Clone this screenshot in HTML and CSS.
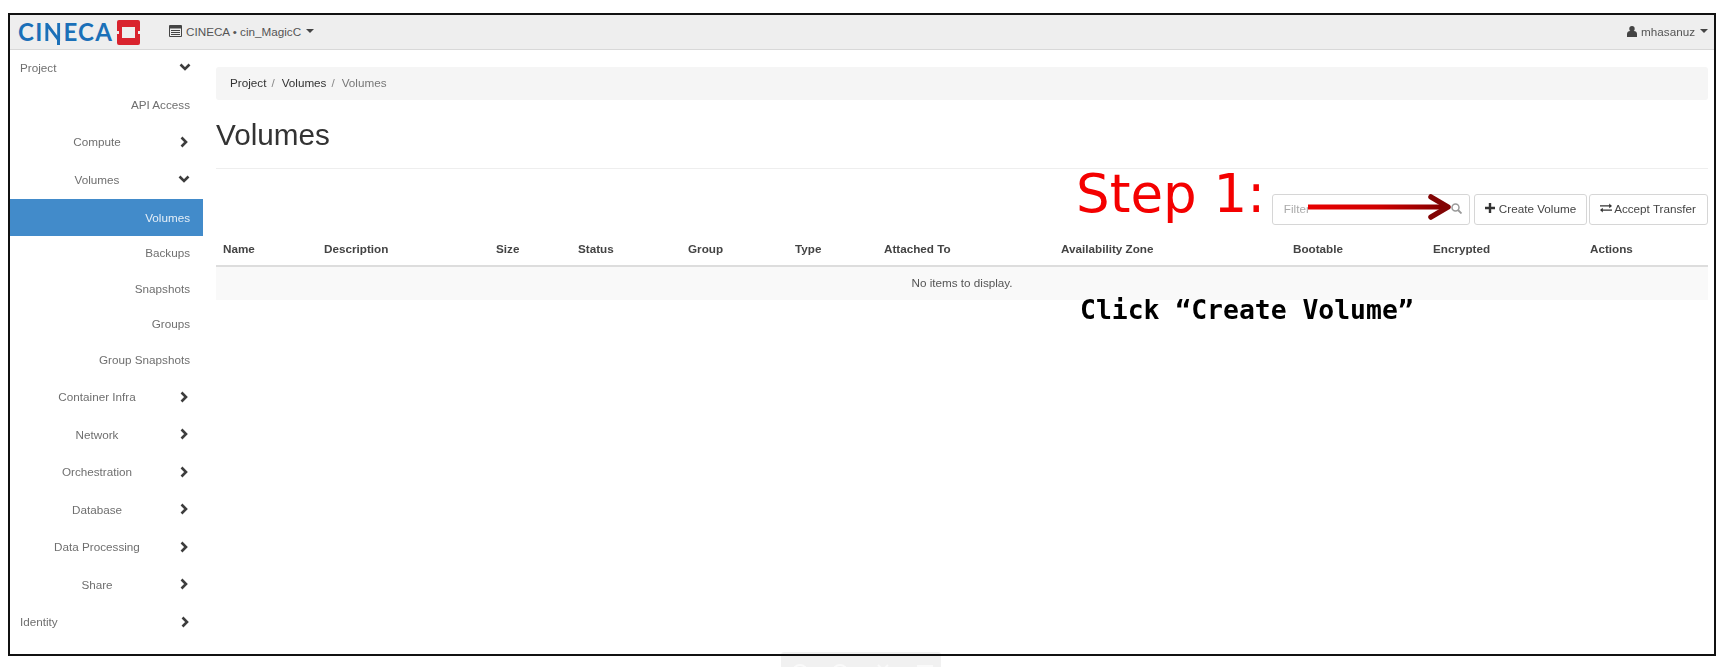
FILE: index.html
```html
<!DOCTYPE html>
<html lang="en">
<head>
  <meta charset="UTF-8">
  <title>Volumes</title>
  <link rel="stylesheet" href="styles.css">
</head>
<body>
  <!-- toolbar of the viewer, cut off by the bottom of the window -->
  <div class="dock">
    <svg width="160" height="15" viewBox="0 0 160 15">
      <g fill="none" stroke="#fafafa" stroke-width="2">
        <circle cx="19" cy="20" r="7"/>
        <circle cx="59" cy="20" r="7"/>
        <path d="M97 13l5 5 5-5"/>
        <rect x="137" y="14" width="14" height="10"/>
      </g>
    </svg>
  </div>

  <div class="frame">
    <header class="navbar">
      <div class="brand">
        <span class="brand-name">CI<span class="brand-n">N</span>ECA</span>
        <svg class="brand-mark" width="23" height="25" viewBox="0 0 23 25">
          <path fill="#d9232e" fill-rule="evenodd" d="M2 0H21a2 2 0 0 1 2 2V11H21V14H23V23a2 2 0 0 1-2 2H2a2 2 0 0 1-2-2V14H2V11H0V2A2 2 0 0 1 2 0ZM5 7V18H18V7Z"/>
        </svg>
      </div>
      <div class="project-switch">
        <svg class="icon" width="13" height="12" viewBox="0 0 13 12">
          <path fill="#444" fill-rule="evenodd" d="M1 0H12a1 1 0 0 1 1 1V11a1 1 0 0 1-1 1H1a1 1 0 0 1-1-1V1A1 1 0 0 1 1 0ZM1 3.500V11H12V3.500ZM2 5H11V6H2ZM2 7H11V8H2ZM2 9H11V10H2Z"/>
        </svg>
        <span>CINECA • cin_MagicC</span>
        <span class="caret"></span>
      </div>
      <div class="user-menu">
        <svg class="icon" width="10" height="11" viewBox="0 0 10 11">
          <circle cx="5" cy="2.800" r="2.700" fill="#444"/>
          <path fill="#444" d="M0 11V8C0 6 1.500 5 3 5H7C8.500 5 10 6 10 8V11Z"/>
        </svg>
        <span>mhasanuz</span>
        <span class="caret"></span>
      </div>
    </header>

    <div class="layout">
      <nav class="sidebar">
        <div class="nav-row top first">
          <span class="nav-label">Project</span>
          <svg class="chev" width="12" height="12" viewBox="0 0 12 12"><path d="M1.500 3.500 6 8l4.500-4.500"/></svg>
        </div>
        <div class="nav-row leaf api">API Access</div>
        <div class="nav-row group">
          <span class="nav-label">Compute</span>
          <svg class="chev" width="12" height="12" viewBox="0 0 12 12"><path d="M3.500 1.500 8 6l-4.500 4.500"/></svg>
        </div>
        <div class="nav-row group">
          <span class="nav-label">Volumes</span>
          <svg class="chev" width="12" height="12" viewBox="0 0 12 12"><path d="M1.500 3.500 6 8l4.500-4.500"/></svg>
        </div>
        <div class="nav-row leaf active">Volumes</div>
        <div class="nav-row leaf">Backups</div>
        <div class="nav-row leaf">Snapshots</div>
        <div class="nav-row leaf">Groups</div>
        <div class="nav-row leaf last">Group Snapshots</div>
        <div class="nav-row group">
          <span class="nav-label">Container Infra</span>
          <svg class="chev" width="12" height="12" viewBox="0 0 12 12"><path d="M3.500 1.500 8 6l-4.500 4.500"/></svg>
        </div>
        <div class="nav-row group">
          <span class="nav-label">Network</span>
          <svg class="chev" width="12" height="12" viewBox="0 0 12 12"><path d="M3.500 1.500 8 6l-4.500 4.500"/></svg>
        </div>
        <div class="nav-row group">
          <span class="nav-label">Orchestration</span>
          <svg class="chev" width="12" height="12" viewBox="0 0 12 12"><path d="M3.500 1.500 8 6l-4.500 4.500"/></svg>
        </div>
        <div class="nav-row group">
          <span class="nav-label">Database</span>
          <svg class="chev" width="12" height="12" viewBox="0 0 12 12"><path d="M3.500 1.500 8 6l-4.500 4.500"/></svg>
        </div>
        <div class="nav-row group">
          <span class="nav-label">Data Processing</span>
          <svg class="chev" width="12" height="12" viewBox="0 0 12 12"><path d="M3.500 1.500 8 6l-4.500 4.500"/></svg>
        </div>
        <div class="nav-row group">
          <span class="nav-label">Share</span>
          <svg class="chev" width="12" height="12" viewBox="0 0 12 12"><path d="M3.500 1.500 8 6l-4.500 4.500"/></svg>
        </div>
        <div class="nav-row top">
          <span class="nav-label">Identity</span>
          <svg class="chev" width="12" height="12" viewBox="0 0 12 12"><path d="M3.500 1.500 8 6l-4.500 4.500"/></svg>
        </div>
      </nav>

      <main class="content">
        <div class="breadcrumb">
          <span>Project</span><i>/</i><span>Volumes</span><i>/</i><span class="current">Volumes</span>
        </div>
        <h1 class="page-title">Volumes</h1>
        <div class="toolbar">
          <div class="filter">
            <span class="filter-text">Filter</span>
            <svg width="11" height="11" viewBox="0 0 11 11">
              <circle cx="4.500" cy="4.500" r="3.500" fill="none" stroke="#999" stroke-width="1.500"/>
              <path d="M7 7l3.500 3.500" stroke="#999" stroke-width="1.800"/>
            </svg>
          </div>
          <button class="btn">
            <svg width="10" height="10" viewBox="0 0 10 10"><path fill="#333" d="M3.800 0H6.200V3.800H10V6.200H6.200V10H3.800V6.200H0V3.800H3.800Z"/></svg>
            Create Volume
          </button>
          <button class="btn transfer">
            <svg width="12" height="10" viewBox="0 0 13 10"><path fill="#333" d="M0 2H10V0L13 2.700 10 5.200V3.500H0ZM13 6.500H3V4.800L0 7.300 3 10V8H13Z"/></svg>
            Accept Transfer
          </button>
        </div>
        <div class="table">
          <div class="thead">
            <span class="col-name">Name</span>
            <span class="col-desc">Description</span>
            <span class="col-size">Size</span>
            <span class="col-status">Status</span>
            <span class="col-group">Group</span>
            <span class="col-type">Type</span>
            <span class="col-attached">Attached To</span>
            <span class="col-zone">Availability Zone</span>
            <span class="col-boot">Bootable</span>
            <span class="col-enc">Encrypted</span>
            <span class="col-actions">Actions</span>
          </div>
          <div class="empty-row">No items to display.</div>
        </div>
      </main>
    </div>

    <!-- annotation drawn on top of the screenshot -->
    <div class="step-title">Step 1:</div>
    <svg class="step-arrow" width="150" height="30" viewBox="0 0 150 30">
      <defs>
        <linearGradient id="arrowFill" x1="0" x2="1" y1="0" y2="0">
          <stop offset="0" stop-color="#e80000"/>
          <stop offset="0.5" stop-color="#d00000"/>
          <stop offset="1" stop-color="#800000"/>
        </linearGradient>
      </defs>
      <rect x="0" y="12.500" width="138" height="5" fill="url(#arrowFill)"/>
      <path d="M123 5 140 15 123 25" fill="none" stroke="#820404" stroke-width="5.500" stroke-linecap="round" stroke-linejoin="round"/>
    </svg>
    <div class="step-note">Click “Create Volume”</div>
  </div>
</body>
</html>
```

FILE: styles.css
```css
html, body {
  margin: 0;
  padding: 0;
  height: 100%;
  background: #fff;
  overflow: hidden;
}
body {
  padding: 13px 8px 0 8px;
  box-sizing: border-box;
  font-family: "Liberation Sans", Arial, sans-serif;
  font-size: 11.700px;
  color: #333;
}
/* the reference is a scaled-down capture, so everything is a bit soft */
.frame {
  position: relative;
  box-sizing: border-box;
  width: 1708px;
  height: 643px;
  border: 2px solid #111;
  overflow: hidden;
  filter: blur(0.45px);
}
.icon {
  flex: none;
}

/* top bar */
.navbar {
  display: flex;
  align-items: center;
  height: 35px;
  box-sizing: border-box;
  background: #eeeeee;
  border-bottom: 1px solid #d8d8d8;
  color: #555;
}
.brand {
  display: flex;
  align-items: center;
  gap: 4px;
  margin-left: 8px;
  width: 151px;
}
.brand-name {
  font-family: "Lato", sans-serif;
  font-size: 24px;
  font-weight: 700;
  letter-spacing: 1.300px;
  color: #1b70b8;
  line-height: 30px;
}
.brand-n {
  position: relative;
}
.brand-n::after {
  content: "";
  position: absolute;
  right: 3.500px;
  top: 23px;
  width: 2.500px;
  height: 5px;
  background: #1b70b8;
}
.project-switch {
  display: flex;
  align-items: center;
  gap: 4px;
  padding-bottom: 2px;
}
.user-menu {
  display: flex;
  align-items: center;
  gap: 4px;
  margin-left: auto;
  margin-right: 6px;
  padding-bottom: 2px;
}
.caret {
  width: 0;
  height: 0;
  margin-left: 1px;
  border-top: 4px solid #444;
  border-left: 4px solid transparent;
  border-right: 4px solid transparent;
}

.layout {
  display: flex;
  align-items: flex-start;
}

/* side menu */
.sidebar {
  flex: none;
  width: 193px;
  color: #6f6f6f;
}
.nav-row {
  display: flex;
  align-items: center;
  height: 37.500px;
  box-sizing: border-box;
  padding-bottom: 2px;
}
.nav-row.first {
  height: 36px;
}
.nav-row.top {
  padding-left: 10px;
  padding-right: 12px;
}
.nav-row.top .nav-label {
  flex: 1;
}
.nav-row.group {
  padding-right: 12px;
}
.nav-row.group .nav-label {
  flex: none;
  width: 174px;
  text-align: center;
}
.nav-row.group .chev {
  margin-left: -6px;
}
.nav-row.leaf {
  justify-content: flex-end;
  padding-right: 13px;
  height: 35.500px;
}
.nav-row.leaf.api {
  height: 38px;
}
.nav-row.leaf.last {
  height: 36.500px;
}
.nav-row.leaf.active {
  height: 37px;
  padding-bottom: 0;
  background: #428bca;
  color: #e4eef7;
}
.chev {
  flex: none;
  fill: none;
  stroke: #3d3d3d;
  stroke-width: 2.600;
}

/* main column */
.content {
  flex: 1;
  padding: 17px 6px 0 13px;
}
.breadcrumb {
  display: flex;
  align-items: center;
  height: 33px;
  box-sizing: border-box;
  padding: 0 0 3px 14px;
  background: #f5f5f5;
  border-radius: 3px;
}
.breadcrumb i {
  font-style: normal;
  color: #888;
  margin: 0 7px 0 5px;
}
.breadcrumb .current {
  color: #777;
}
.page-title {
  margin: 0;
  padding: 17px 0 17px 0;
  height: 69px;
  box-sizing: border-box;
  line-height: 35px;
  font-size: 29.700px;
  font-weight: 400;
  color: #333;
  border-bottom: 1px solid #eeeeee;
}
.toolbar {
  display: flex;
  justify-content: flex-end;
  gap: 4px;
  margin-top: 25px;
  height: 31px;
}
.filter {
  display: flex;
  align-items: center;
  justify-content: space-between;
  width: 198px;
  box-sizing: border-box;
  padding: 0 7px 3px 11px;
  border: 1px solid #d6d6d6;
  border-radius: 3px;
  color: #aaa;
}
.btn {
  display: flex;
  align-items: center;
  gap: 4px;
  padding: 0 10px 3px 10px;
  background: #fff;
  border: 1px solid #d6d6d6;
  border-radius: 3px;
  font-family: inherit;
  font-size: 11.700px;
  color: #444;
}
.btn.transfer {
  gap: 2px;
  margin-left: -2px;
  padding: 0 11px 3px 10px;
}

/* volumes table */
.table {
  margin-top: 8px;
}
.thead {
  display: flex;
  align-items: center;
  height: 30px;
  padding-bottom: 2px;
  border-bottom: 2px solid #dddddd;
  font-weight: 700;
  color: #444;
}
.thead span {
  flex: none;
}
.col-name { width: 101px; padding-left: 7px; }
.col-desc { width: 172px; }
.col-size { width: 82px; }
.col-status { width: 110px; }
.col-group { width: 107px; }
.col-type { width: 89px; }
.col-attached { width: 177px; }
.col-zone { width: 232px; }
.col-boot { width: 140px; }
.col-enc { width: 157px; }
.empty-row {
  height: 33px;
  line-height: 31px;
  text-align: center;
  background: #f9f9f9;
  color: #555;
}

/* annotation on top */
.step-title {
  position: absolute;
  left: 1066px;
  top: 149px;
  font-family: "DejaVu Sans", sans-serif;
  font-size: 53px;
  line-height: 60px;
  color: #f40000;
}
.step-arrow {
  position: absolute;
  left: 1298px;
  top: 177px;
}
.step-note {
  position: absolute;
  left: 1070px;
  top: 279px;
  font-family: "DejaVu Sans Mono", monospace;
  font-size: 26.400px;
  font-weight: 700;
  line-height: 32px;
  color: #000;
}
.dock {
  position: absolute;
  left: 781px;
  top: 652px;
  width: 160px;
  height: 15px;
  overflow: hidden;
  background: #f1f1f1;
  border-radius: 3px 3px 0 0;
}
```
